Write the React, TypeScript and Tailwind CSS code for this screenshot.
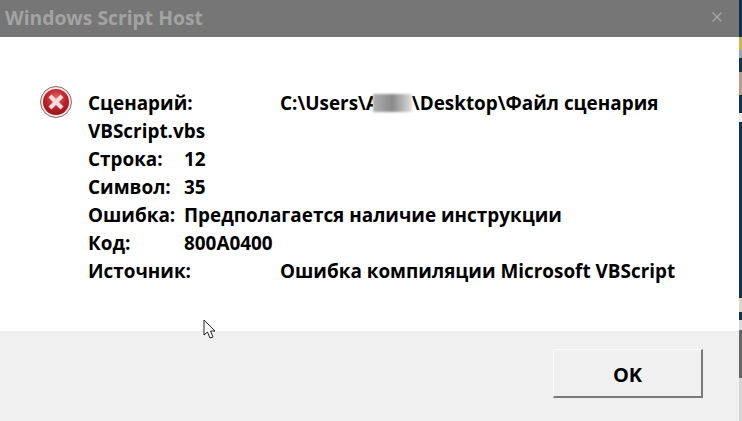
const rows: { label: string; value: string }[] = [
  { label: 'Строка:', value: '12' },
  { label: 'Символ:', value: '35' },
  { label: 'Ошибка:', value: 'Предполагается наличие инструкции' },
  { label: 'Код:', value: '800A0400' },
];

function ErrorIcon() {
  return (
    <svg width="34" height="34" viewBox="0 0 34 34" className="shrink-0">
      <defs>
        <radialGradient id="redFill" cx="50%" cy="35%" r="70%">
          <stop offset="0%" stopColor="#e06a6a" />
          <stop offset="55%" stopColor="#bd2228" />
          <stop offset="100%" stopColor="#8e1216" />
        </radialGradient>
      </defs>
      <circle cx="17" cy="17" r="15.5" fill="#f3e3e3" stroke="#8f6a6a" strokeWidth="1" />
      <circle cx="17" cy="17" r="13" fill="url(#redFill)" />
      <path d="M11 11 L23 23 M23 11 L11 23" stroke="#f0dede" strokeWidth="4.2" />
    </svg>
  );
}

function Cursor() {
  return (
    <svg width="16" height="22" viewBox="0 0 16 22" className="absolute left-[203px] top-[319px]">
      <path d="M1 1 L1 16 L4.5 13 L7 19 L10 18 L7.5 12 L12 12 Z" fill="#fff" stroke="#222" strokeWidth="1" />
    </svg>
  );
}

// sliver of the desktop visible right of the dialog
function DesktopStrip() {
  return (
    <div className="flex w-[3px] flex-col bg-[#12324f]">
      <div className="h-[37px] bg-[#0f2f4e]" />
      <div className="h-[13px] bg-[#c9b84a]" />
      <div className="h-[8px] bg-[#8fa6bb]" />
      <div className="h-[14px]" />
      <div className="h-[23px] bg-[#b89c88]" />
      <div className="h-[18px]" />
      <div className="h-[9px] bg-[#e6e8ec]" />
      <div className="h-[176px]" />
      <div className="h-[14px] bg-[#d9d9c4]" />
      <div className="h-[8px]" />
      <div className="h-[10px] bg-[#d5dbe2]" />
      <div className="h-[48px] bg-[#666666]" />
      <div className="flex-1 bg-[#d6d6d6]" />
    </div>
  );
}

export default function App() {
  return (
    <div className="relative flex h-[421px] w-[742px] overflow-hidden bg-white font-['Open_Sans','Noto_Sans',sans-serif] text-black">
      <div className="flex w-[739px] flex-col">
        {/* Title bar */}
        <div className="flex h-[37px] items-center justify-between bg-[#767676] pl-[5px] pr-[17px]">
          <span className="text-[19.3px] font-bold text-[#a3a3a3]">Windows Script Host</span>
          <svg width="10" height="10" viewBox="0 0 10 10" className="mb-[4px]">
            <path d="M0.5 0.5 L9.5 9.5 M9.5 0.5 L0.5 9.5" stroke="#a8a8a8" strokeWidth="1.2" />
          </svg>
        </div>

        {/* Message */}
        <div className="flex h-[294px] gap-[15px] pl-[39px] pt-[48px]">
          <ErrorIcon />
          <div className="flex w-[600px] flex-col pt-[4px] text-[18.9px] leading-[28px] font-bold">
            <div className="flex">
              <span className="w-[192px]">Сценарий:</span>
              <span className="flex">
                C:\Users\
                <span className="w-[7px] overflow-hidden">A</span>
                <span className="my-[5px] h-[18px] w-[39px] bg-gradient-to-r from-[#b0b0b0] via-[#8a8a8a] to-[#e0e0e0] blur-[1px]" />
                \Desktop\Файл сценария
              </span>
            </div>
            <div>VBScript.vbs</div>
            {rows.map((row) => (
              <div key={row.label} className="flex">
                <span className="w-[96px]">{row.label}</span>
                <span>{row.value}</span>
              </div>
            ))}
            <div className="flex">
              <span className="w-[192px]">Источник:</span>
              <span>Ошибка компиляции Microsoft VBScript</span>
            </div>
          </div>
        </div>

        {/* Footer */}
        <div className="flex flex-1 items-start justify-end bg-[#f0f0f0] pr-[36px] pt-[18px]">
          <button className="flex h-[49px] w-[150px] items-center justify-center border-t border-l border-t-[#fafafa] border-l-[#fafafa] border-r-2 border-b-2 border-r-[#7a7a7a] border-b-[#7a7a7a] bg-[#f0f0f0] pt-[3px] text-[20px] font-bold">
            OK
          </button>
        </div>
      </div>

      <DesktopStrip />
      <Cursor />
    </div>
  );
}
